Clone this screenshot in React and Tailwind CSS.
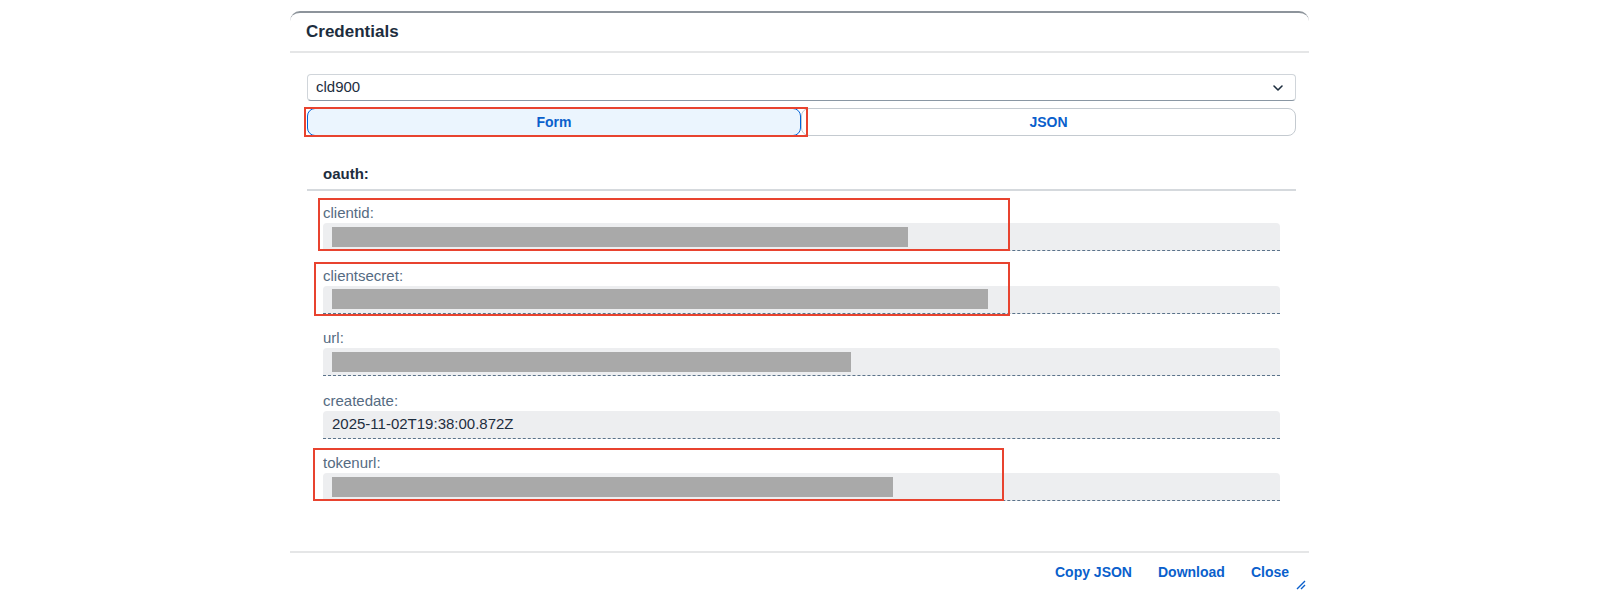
import { ChevronDown } from 'lucide-react'

const FIELDS = [
  { key: 'clientid', bar: 576, boxed: { l: 5, t: 5, w: 692, h: 53 } },
  { key: 'clientsecret', bar: 656, boxed: { l: 9, t: 4, w: 696, h: 54 } },
  { key: 'url', bar: 519 },
  { key: 'createdate', value: '2025-11-02T19:38:00.872Z' },
  { key: 'tokenurl', bar: 561, boxed: { l: 10, t: 5, w: 691, h: 53 } },
]

function Field({ field }) {
  return (
    <div className="relative">
      <div className="h-[20px] leading-[20px] text-[15px] text-[#556b82]">{field.key}:</div>
      <div className="h-[28px] rounded-t-[4px] bg-[#edeef0] border-b border-dashed border-[#5b738b] flex items-center pl-[9px]">
        {field.value ? (
          <span className="text-[15px] text-[#1d2d3e]">{field.value}</span>
        ) : (
          <div className="h-[20px] bg-[#a9a9a9]" style={{ width: field.bar }} />
        )}
      </div>
      {field.boxed && (
        <div
          className="absolute border-2 border-[#e8432f] pointer-events-none"
          style={{ left: -field.boxed.l, top: -field.boxed.t, width: field.boxed.w, height: field.boxed.h }}
        />
      )}
    </div>
  )
}

export default function App() {
  return (
    <div className="w-[1600px] h-[602px] bg-white overflow-hidden" style={{ fontFamily: '"Liberation Sans", Arial, sans-serif' }}>
      <div className="relative ml-[290px] mt-[11px] w-[1019px] h-[580px] bg-white rounded-t-[10px] border-t-2 border-[#8d949b] flex flex-col">
        <header className="h-[40px] shrink-0 flex items-center pl-4 border-b-2 border-[#e5e6e7]">
          <h2 className="text-[17px] font-bold text-[#1d2d3e]">Credentials</h2>
        </header>

        <div className="flex-1 pl-[17px] pr-[13px] pt-[21px]">
          <div className="h-[27px] flex items-center justify-between rounded-[4px] border border-[#d0d5da] border-b-[#8a97a4] bg-white pl-2 pr-[9px]">
            <span className="text-[15px] text-[#1d2d3e]">cld900</span>
            <ChevronDown size={16} strokeWidth={2.4} className="text-[#1d2d3e]" />
          </div>

          <div className="mt-[7px] flex relative">
            <button className="w-[494px] h-[28px] rounded-[8px] border border-[#0064d9] bg-[#ebf5fe] text-[14px] font-bold text-[#0a5fcc]">
              Form
            </button>
            <button className="flex-1 h-[28px] rounded-[8px] border border-[#c4cad0] bg-white text-[14px] font-bold text-[#0a5fcc]">
              JSON
            </button>
            <div className="absolute -left-[3px] -top-[1px] w-[504px] h-[30px] border-2 border-[#e8432f] pointer-events-none" />
          </div>

          <div className="mt-[29px] pl-4 h-[18px] leading-[18px] text-[15px] font-bold text-[#1d2d3e]">oauth:</div>
          <div className="mt-[6px] border-b-2 border-[#d5d9dd]" />

          <div className="mt-[12px] px-4 flex flex-col gap-[14.5px]">
            {FIELDS.map(f => (
              <Field key={f.key} field={f} />
            ))}
          </div>
        </div>

        <footer className="h-[40px] shrink-0 border-t-2 border-[#e5e6e7] flex items-center justify-end pr-[8px] gap-[2px]">
          <button className="px-3 text-[14px] font-bold text-[#0a5fcc]">Copy JSON</button>
          <button className="px-3 text-[14px] font-bold text-[#0a5fcc]">Download</button>
          <button className="px-3 text-[14px] font-bold text-[#0a5fcc]">Close</button>
        </footer>

        {/* resize grip */}
        <svg className="absolute right-[3px] bottom-[1px]" width="10" height="10" viewBox="0 0 10 10">
          <path d="M1 9 L9 1 M5 9 L9 5" stroke="#0a5fcc" strokeWidth="1.4" />
        </svg>
      </div>
    </div>
  )
}
